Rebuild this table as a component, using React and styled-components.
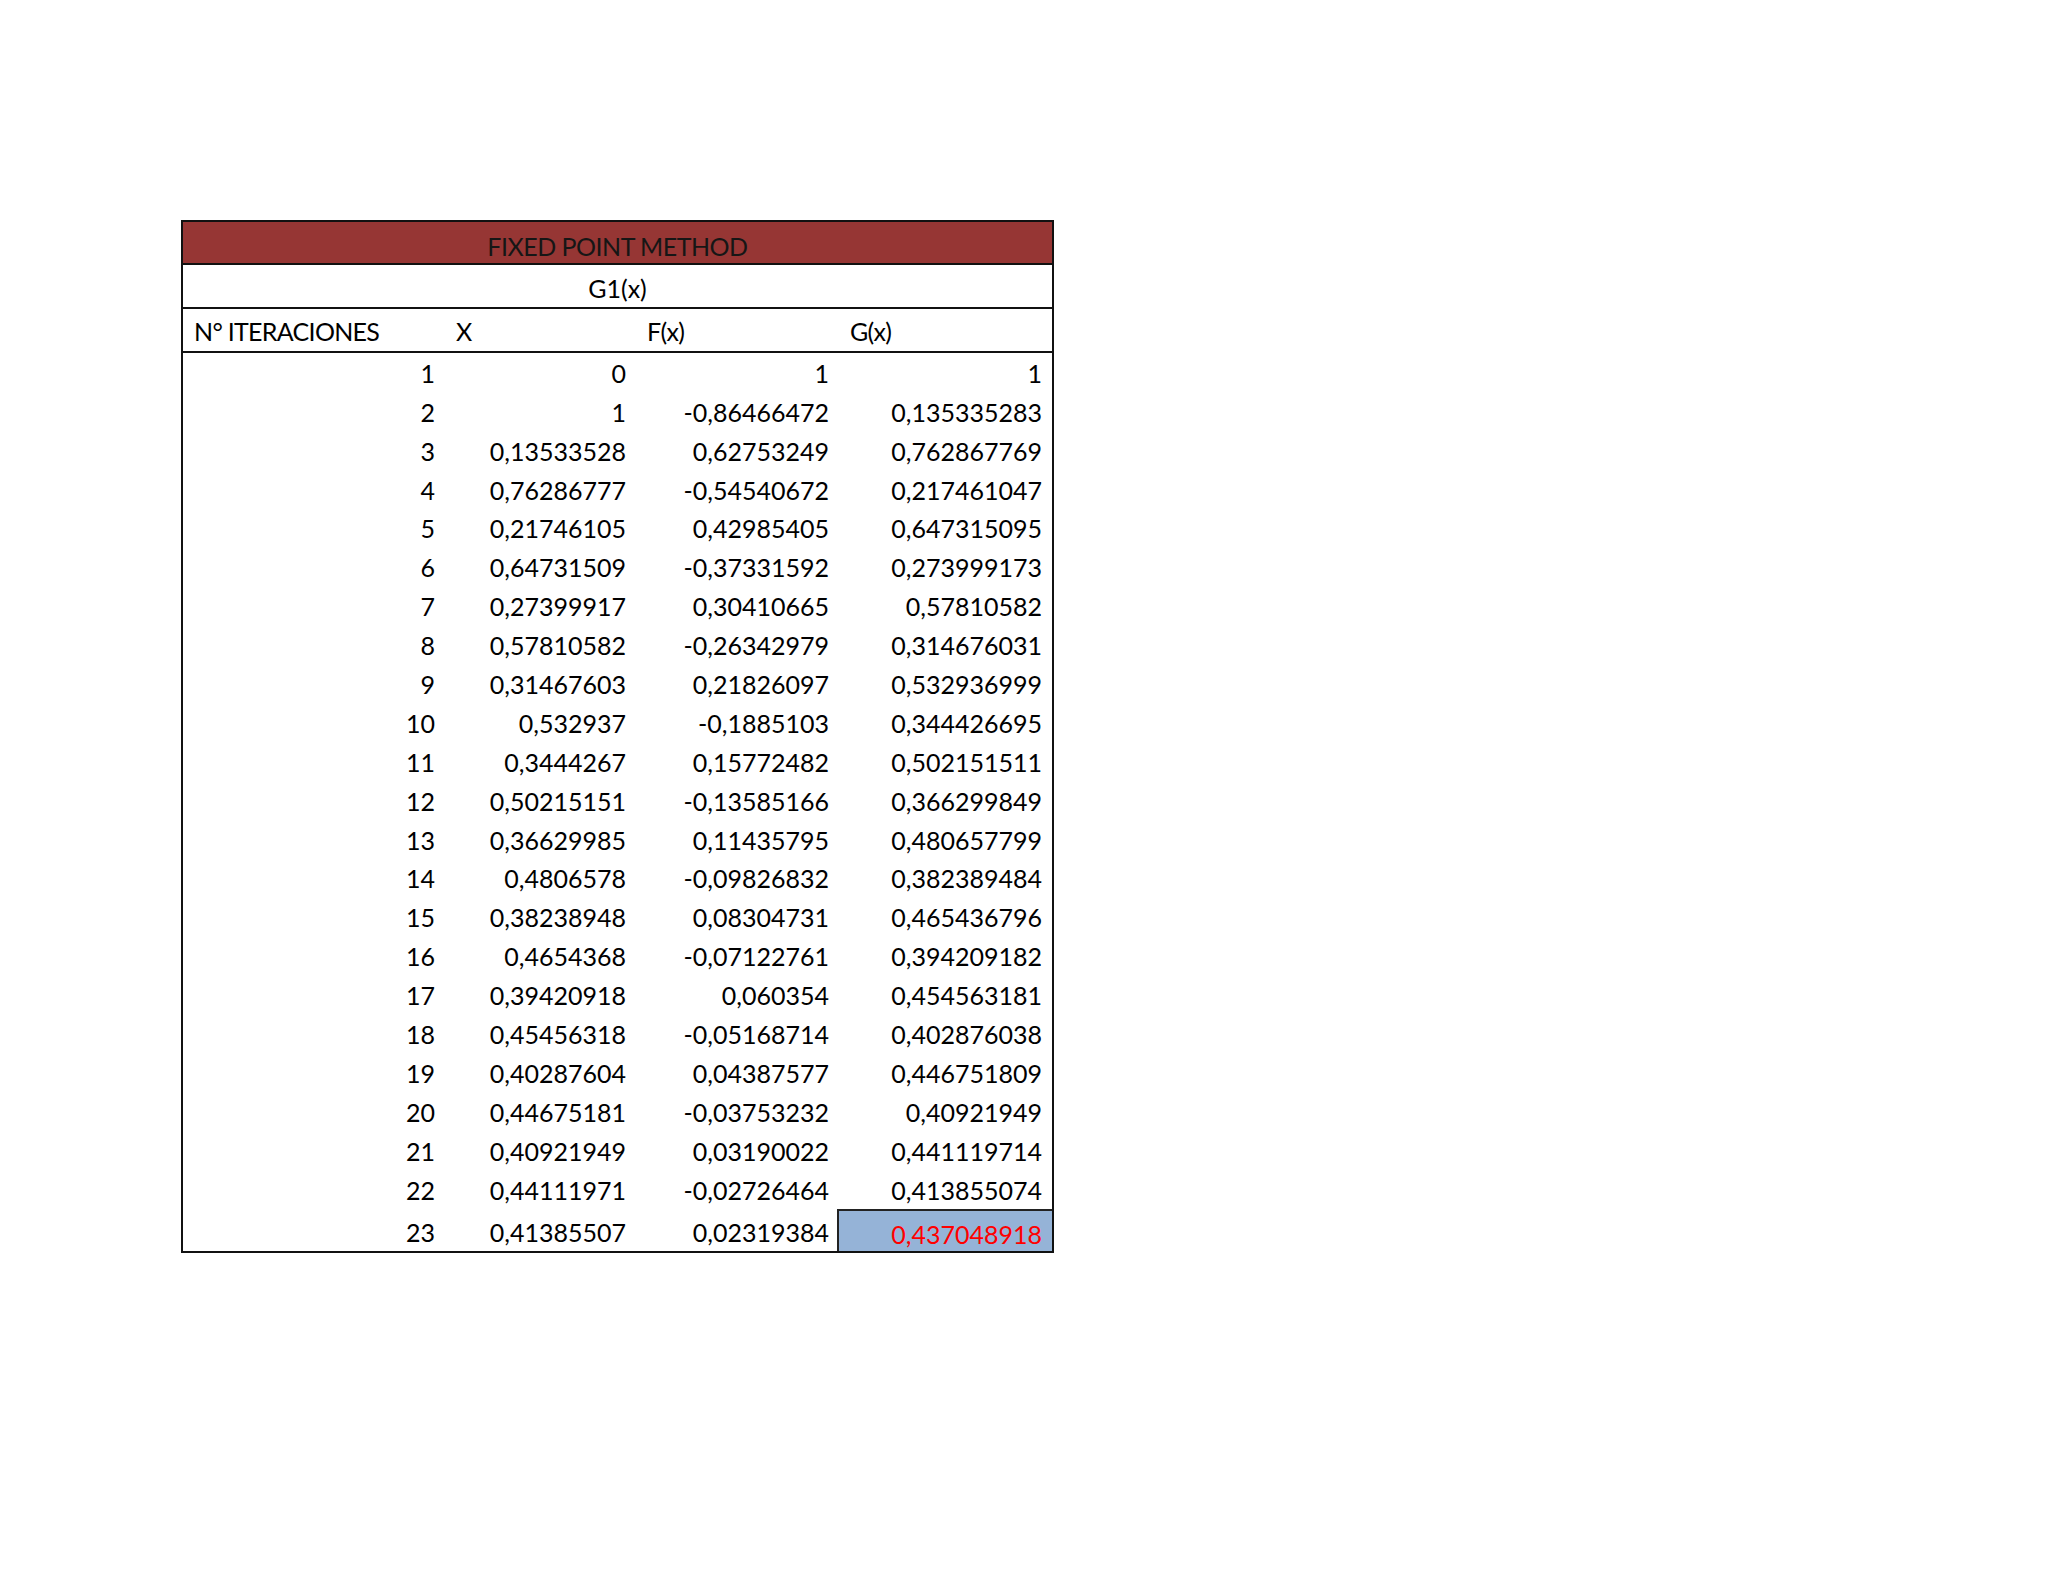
import React from "react";
import styled, { createGlobalStyle } from "styled-components";

const GlobalStyle = createGlobalStyle`
  html, body {
    margin: 0;
    padding: 0;
    background: #ffffff;
  }
  body {
    font-family: Lato, "Open Sans", sans-serif;
    color: #000;
  }
`;

const Page = styled.div`
  width: 2048px;
  height: 1582px;
  padding: 220px 0 0 181px;
  box-sizing: border-box;
`;

const Sheet = styled.div`
  width: 873px;
  border: 2px solid #111;
  box-sizing: border-box;
  font-size: 25px;
  line-height: 1;
`;

const TitleBar = styled.div`
  height: 43px;
  background: #963634;
  color: #161616;
  display: flex;
  align-items: flex-end;
  justify-content: center;
  padding-bottom: 4px;
  box-sizing: border-box;
  border-bottom: 2px solid #111;
  letter-spacing: -0.5px;
`;

const SubTitle = styled.div`
  height: 44px;
  display: flex;
  align-items: flex-end;
  justify-content: center;
  padding-bottom: 6px;
  box-sizing: border-box;
  border-bottom: 2px solid #111;
`;

const Row = styled.div`
  display: grid;
  grid-template-columns: 262px 191px 203px 213px;
  height: ${(p) => p.$h}px;
  border-bottom: ${(p) => (p.$line ? "2px solid #111" : "none")};
  box-sizing: border-box;
`;

const Cell = styled.div`
  display: flex;
  align-items: flex-end;
  justify-content: ${(p) => (p.$left ? "flex-start" : "flex-end")};
  padding: 0 10px ${(p) => p.$pb || 6}px 11px;
  box-sizing: border-box;
  white-space: nowrap;
  letter-spacing: ${(p) => (p.$left ? "-0.7px" : "0")};
  background: ${(p) => (p.$hl ? "#95b3d7" : "transparent")};
  color: ${(p) => (p.$hl ? "#ff0000" : "inherit")};
  border-left: ${(p) => (p.$hl ? "2px solid #222" : "none")};
  border-top: ${(p) => (p.$hl ? "2px solid #222" : "none")};
  margin-left: ${(p) => (p.$hl ? "-2px" : "0")};
`;

const rows = [
  ["1", "0", "1", "1"],
  ["2", "1", "-0,86466472", "0,135335283"],
  ["3", "0,13533528", "0,62753249", "0,762867769"],
  ["4", "0,76286777", "-0,54540672", "0,217461047"],
  ["5", "0,21746105", "0,42985405", "0,647315095"],
  ["6", "0,64731509", "-0,37331592", "0,273999173"],
  ["7", "0,27399917", "0,30410665", "0,57810582"],
  ["8", "0,57810582", "-0,26342979", "0,314676031"],
  ["9", "0,31467603", "0,21826097", "0,532936999"],
  ["10", "0,532937", "-0,1885103", "0,344426695"],
  ["11", "0,3444267", "0,15772482", "0,502151511"],
  ["12", "0,50215151", "-0,13585166", "0,366299849"],
  ["13", "0,36629985", "0,11435795", "0,480657799"],
  ["14", "0,4806578", "-0,09826832", "0,382389484"],
  ["15", "0,38238948", "0,08304731", "0,465436796"],
  ["16", "0,4654368", "-0,07122761", "0,394209182"],
  ["17", "0,39420918", "0,060354", "0,454563181"],
  ["18", "0,45456318", "-0,05168714", "0,402876038"],
  ["19", "0,40287604", "0,04387577", "0,446751809"],
  ["20", "0,44675181", "-0,03753232", "0,40921949"],
  ["21", "0,40921949", "0,03190022", "0,441119714"],
  ["22", "0,44111971", "-0,02726464", "0,413855074"],
  ["23", "0,41385507", "0,02319384", "0,437048918"],
];

export default function App() {
  return (
    <>
      <GlobalStyle />
      <Page>
        <Sheet>
          <TitleBar>FIXED POINT METHOD</TitleBar>
          <SubTitle>G1(x)</SubTitle>
          <Row $h={44} $line>
            <Cell $left $pb={7}>N° ITERACIONES</Cell>
            <Cell $left $pb={7}>X</Cell>
            <Cell $left $pb={7}>F(x)</Cell>
            <Cell $left $pb={7}>G(x)</Cell>
          </Row>
          {rows.map((r, i) => {
            const last = i === rows.length - 1;
            return (
              <Row key={r[0]} $h={last ? 42 : 38.9}>
                <Cell>{r[0]}</Cell>
                <Cell>{r[1]}</Cell>
                <Cell>{r[2]}</Cell>
                <Cell $hl={last} $pb={last ? 4 : 6}>{r[3]}</Cell>
              </Row>
            );
          })}
        </Sheet>
      </Page>
    </>
  );
}
